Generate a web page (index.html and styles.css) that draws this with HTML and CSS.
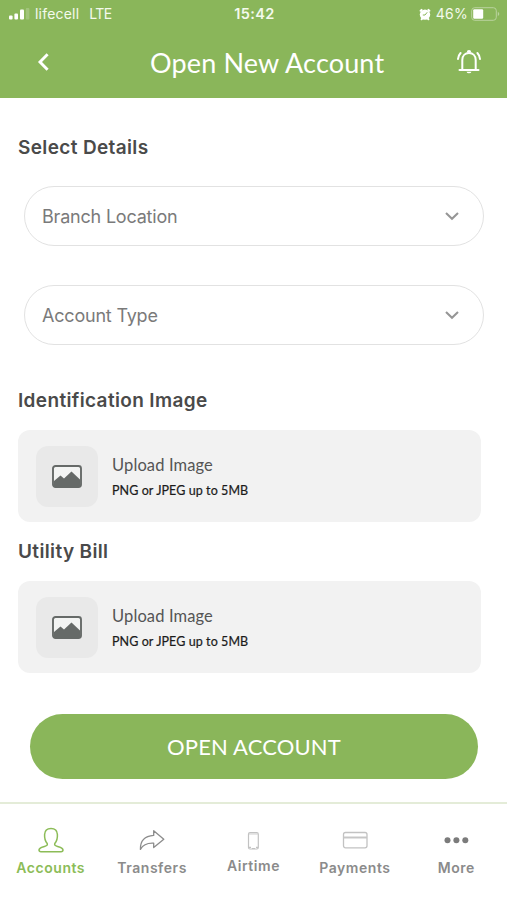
FILE: index.html
```
<!DOCTYPE html>
<html lang="en">
<head>
<meta charset="utf-8">
<title>Open New Account</title>
<link rel="stylesheet" href="styles.css">
</head>
<body>
<div class="screen">
  <header class="top">
    <div class="status">
      <div class="carrier">
        <svg class="signal" width="21" height="12" viewBox="0 0 21 12"><g fill="#fff"><rect x="0" y="7.5" width="3.6" height="4" rx="1"/><rect x="5.4" y="5.5" width="3.6" height="6" rx="1"/><rect x="11" y="1.5" width="4" height="10" rx="1"/><rect x="16.8" y="0" width="3.6" height="11.5" rx="1" opacity=".2"/></g></svg>
        <span class="network">lifecell</span><span class="lte">LTE</span>
      </div>
      <span class="clock">15:42</span>
      <div class="power">
        <svg class="alarm" width="12" height="13" viewBox="0 0 12 13"><circle cx="6" cy="6.6" r="5.200" fill="#fff"/><path d="M1.600 2.800 2.600 1.900M10.400 2.800 9.400 1.900M2.600 11.200l.6-.6M9.400 11.200l-.6-.6" stroke="#fff" stroke-width="2" stroke-linecap="round"/><path d="M8.2 4.3 6 7H3.8" fill="none" stroke="#8ab65a" stroke-width="1"/></svg>
        <span class="percent">46%</span>
        <svg width="29" height="14" viewBox="0 0 29 14"><rect x=".7" y=".7" width="24.6" height="12.6" rx="3" fill="none" stroke="#b9d39e"/><rect x="2.2" y="2.2" width="10" height="9.6" rx="1.2" fill="#fff"/><path d="M26.8 4.8q3 2.2 0 4.4z" fill="#b9d39e"/></svg>
      </div>
    </div>
    <div class="titlebar">
      <svg class="back" width="14" height="20" viewBox="0 0 14 20"><path d="M11.600 2.300 4 10l7.600 7.700" fill="none" stroke="#fff" stroke-width="2.900"/></svg>
      <h1>Open New Account</h1>
      <svg class="bell" width="28" height="26" viewBox="0 0 28 26"><g fill="none" stroke="#fff" stroke-width="2" stroke-linecap="round"><path d="M4.500 20.900h19"/><path d="M7.300 20V11c0-4.300 2.900-7 6.700-7s6.700 2.700 6.700 7v9"/><path d="M5.600 4Q3.200 6.500 3 10M22.400 4Q24.800 6.500 25 10"/></g><path d="M11.800 3.500a2.200 2.400 0 0 1 4.400 0zM11.500 22.800h5a2.600 2.100 0 0 1-5 0z" fill="#fff"/></svg>
    </div>
  </header>
  <main>
    <h2 class="h-details">Select Details</h2>
    <div class="select"><span class="s-branch">Branch Location</span><svg width="14" height="10" viewBox="0 0 14 10"><path d="M1 2 7 7.700 13 2" fill="none" stroke="#969696" stroke-width="2.100"/></svg></div>
    <div class="select"><span class="s-type">Account Type</span><svg width="14" height="10" viewBox="0 0 14 10"><path d="M1 2 7 7.700 13 2" fill="none" stroke="#969696" stroke-width="2.100"/></svg></div>
    <h2 class="h-ident">Identification Image</h2>
    <div class="upload">
      <div class="thumb"><svg width="30" height="23" viewBox="0 0 30 23"><rect x="1" y="1" width="28" height="21" rx="2.500" fill="#f3f4f3" stroke="#666a68" stroke-width="1.900"/><path d="M2 16 8.500 10.500l3.500 3L19.500 6.500 28 14.500V21H2z" fill="#666a68"/></svg></div>
      <div class="copy"><span class="action">Upload Image</span><span class="hint">PNG or JPEG up to 5MB</span></div>
    </div>
    <h2 class="h-bill">Utility Bill</h2>
    <div class="upload">
      <div class="thumb"><svg width="30" height="23" viewBox="0 0 30 23"><rect x="1" y="1" width="28" height="21" rx="2.500" fill="#f3f4f3" stroke="#666a68" stroke-width="1.900"/><path d="M2 16 8.500 10.500l3.500 3L19.500 6.500 28 14.500V21H2z" fill="#666a68"/></svg></div>
      <div class="copy"><span class="action">Upload Image</span><span class="hint">PNG or JPEG up to 5MB</span></div>
    </div>
    <button class="submit"><span>OPEN ACCOUNT</span></button>
  </main>
  <nav>
    <div class="tab active"><svg width="28" height="28" viewBox="0 0 28 28"><path d="M10.200 17.500C8.300 15.300 7.400 12 7.600 8.500c.2-3.900 2.700-5.900 6.400-5.900s6.200 2 6.400 5.900c.2 3.500-.7 6.800-2.600 9-.6 1.600.4 2.100 2.300 2.800 3.500 1.100 5.900 1.500 5.900 3.700 0 1.400-.6 1.700-2 1.700H4c-1.400 0-2-.3-2-1.700 0-2.200 2.400-2.600 5.900-3.700 1.900-.7 2.900-1.200 2.300-2.800z" fill="none" stroke="#8cbc57" stroke-width="1.500"/></svg><span>Accounts</span></div>
    <div class="tab transfers"><svg width="28" height="28" viewBox="0 0 28 28"><path d="M15.700 4.700 25.800 13.300 15.700 21.500v-4.300C9 16.800 4.800 19 2.400 23.400 2.200 15.400 6.600 10 15.700 9.400z" fill="none" stroke="#8c8c8c" stroke-width="1.300" stroke-linejoin="round"/></svg><span>Transfers</span></div>
    <div class="tab airtime"><svg width="28" height="28" viewBox="0 0 28 28"><rect x="9.500" y="6.700" width="9.800" height="16.300" rx="1.500" fill="none" stroke="#c2c2c2" stroke-width="1.200"/><path d="M10 8h9" stroke="#d0d0d0" stroke-width="1"/><path d="M10 21.300h2M17 21.300h2M13 22.500h3" stroke="#c2c2c2" stroke-width="1.200"/></svg><span>Airtime</span></div>
    <div class="tab payments"><svg width="28" height="28" viewBox="0 0 28 28"><rect x="2.500" y="6.500" width="23.500" height="15.300" rx="2" fill="none" stroke="#c2c2c2" stroke-width="1.300"/><path d="M2.500 11.500h23.500" stroke="#c6c6c6" stroke-width="2"/></svg><span>Payments</span></div>
    <div class="tab more"><svg width="28" height="28" viewBox="0 0 28 28"><g fill="#7b7b7b"><circle cx="5.500" cy="14.200" r="3"/><circle cx="14.400" cy="14.200" r="3"/><circle cx="23.300" cy="14.200" r="3"/></g></svg><span>More</span></div>
  </nav>
</div>
</body>
</html>
```
FILE: styles.css
```
* { box-sizing: border-box; }
body { margin: 0; background: #fff; font-family: Inter, "Liberation Sans", sans-serif; }
.screen { width: 507px; height: 900px; display: flex; flex-direction: column; overflow: hidden; }
h1, h2 { margin: 0; }
svg { display: block; flex: none; }

.top { height: 98px; background: #8ab65a; color: #fff; flex: none; }
.status { height: 28px; display: grid; grid-template-columns: 1fr auto 1fr; align-items: center; padding: 0 7px 0 9px; font-size: 14px; line-height: 28px; color: #f4faed; }
.carrier, .power { display: flex; align-items: center; }
.power { justify-content: flex-end; }
.network { margin-left: 5px; letter-spacing: .2px; }
.lte { margin-left: 10px; letter-spacing: -.5px; }
.clock { font-weight: 600; font-size: 14.500px; letter-spacing: .4px; }
.percent { margin: 0 3px 0 5px; letter-spacing: .3px; }
.titlebar { height: 70px; display: flex; align-items: center; padding: 0 24px 0 36px; }
.back { margin-top: -3px; }
.bell { margin: -2px 0 0 auto; }
h1 { margin-left: 100px; font: 400 27px/34px Lato, sans-serif; letter-spacing: .15px; white-space: nowrap; }

main { flex: none; height: 704px; padding: 37px 23px 0 18px; }
h2 { font-size: 19px; line-height: 26px; font-weight: 600; color: #4a4a4a; letter-spacing: .36px; white-space: nowrap; }
.select { height: 60px; margin: 39px 0 0 6px; width: 460px; border: 1.500px solid #e2e2e2; border-radius: 30px; display: flex; align-items: center; justify-content: space-between; padding: 0 24px 0 17px; font-size: 18px; letter-spacing: -.2px; color: #7a7a7a; }
.h-details + .select { margin-top: 25px; }
.h-ident { margin-top: 43px; }
.upload { width: 463px; height: 92px; margin-top: 16px; padding: 0 18px; background: #f2f2f2; border-radius: 12px; display: flex; align-items: center; gap: 14px; }
.thumb { width: 62px; height: 61px; border-radius: 12px; background: #e9e9e9; display: flex; align-items: center; justify-content: center; }
.copy { display: flex; flex-direction: column; padding-top: 4px; font-family: Lato, sans-serif; white-space: nowrap; }
.action { font-size: 16.500px; line-height: 26px; color: #555; letter-spacing: .12px; }
.hint { font-size: 12.500px; line-height: 26px; color: #1b1b1b; letter-spacing: .08px; -webkit-text-stroke: .2px #1b1b1b; }
.h-bill { margin-top: 17px; }
.submit { display: block; width: 448px; height: 65px; margin: 41px 0 0 12px; padding: 0; border: 0; border-radius: 33px; background: #8ab65a; color: #fff; font: 400 22px/65px Lato, sans-serif; letter-spacing: .15px; }

nav { flex: 1; border-top: 2px solid #e4ecd8; display: grid; grid-template-columns: repeat(5, 1fr); padding-top: 22px; }
.tab { display: flex; flex-direction: column; align-items: center; font-size: 14px; line-height: 20px; font-weight: 600; color: #8b8b8b; letter-spacing: .55px; }
.tab span { margin-top: 4px; }
.airtime span { margin-top: 2px; }
.active { color: #8cbc57; }
```
